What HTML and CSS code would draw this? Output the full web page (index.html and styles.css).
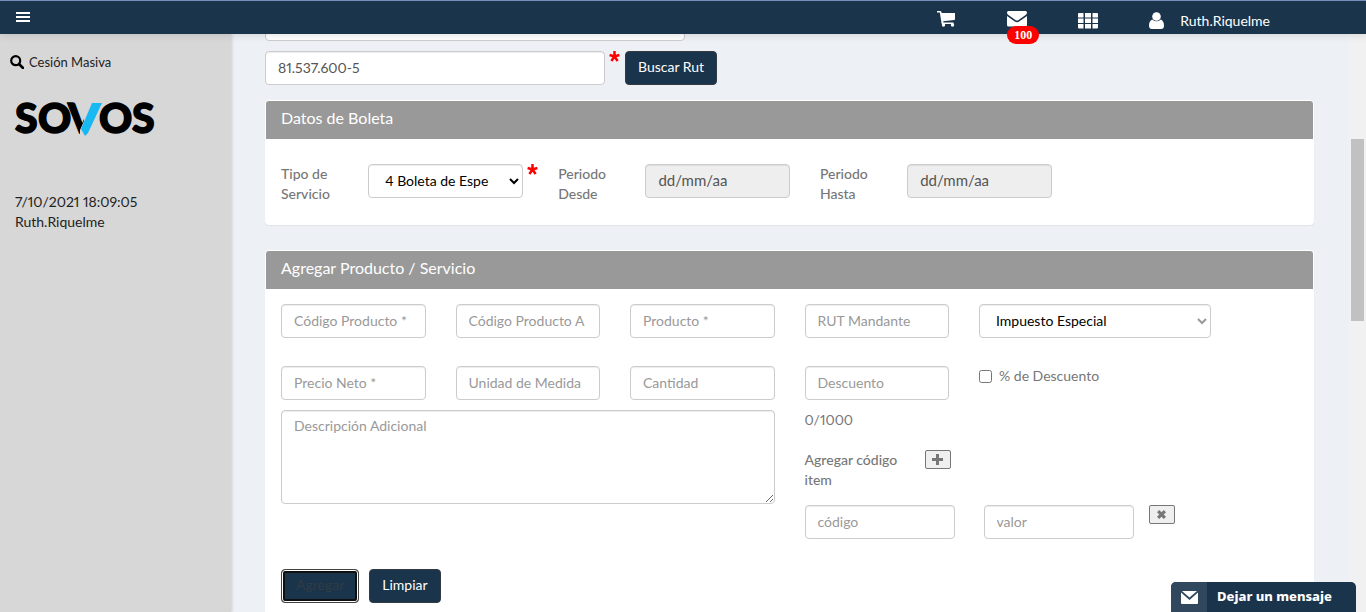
FILE: index.html
```html
<!DOCTYPE html>
<html lang="es">
<head>
<meta charset="utf-8">
<title>Boleta</title>
<link rel="stylesheet" href="styles.css">
</head>
<body>
<header class="topbar">
  <button class="icon-btn menu" aria-label="Menú"><svg width="14" height="12" viewBox="0 0 14 12"><path d="M0 1h14v2H0zM0 5h14v2H0zM0 9h14v2H0z"/></svg></button>
  <nav class="tools">
    <a class="tool" href="#" aria-label="Carro"><svg width="20" height="17" viewBox="0 0 20 17"><path d="M1 1h3.4q.8 0 1 .9l.2 1H19v6.2q0 .8-.8.9L7.2 11.3l.2 1.2H17.500v1.500H6.400q-.7 0-.8-.6L3.800 2.600H1z"/><circle cx="7.500" cy="15" r="1.700"/><circle cx="16.500" cy="15" r="1.700"/></svg></a>
    <a class="tool mail" href="#" aria-label="Mensajes"><svg width="20" height="16" viewBox="0 0 20 16"><path d="M1.500 0h17Q20 0 20 1.500q0 1.500-1.400 2.500l-7 5q-1.600 1.200-3.200 0l-7-5Q0 3 0 1.500 0 0 1.500 0zM0 5l7.800 5.500q2.200 1.500 4.400 0L20 5v9q0 1.500-1.500 1.500h-17Q0 15.500 0 14z"/></svg><span class="badge">100</span></a>
    <a class="tool" href="#" aria-label="Aplicaciones"><svg width="20" height="16" viewBox="0 0 20 16"><path d="M1 0h4.500v4.500H0V1q0-1 1-1zM7 0h6v4.500H7zM14.500 0H19q1 0 1 1v3.500h-5.500zM0 5.500h5.500V10H0zM7 5.500h6V10H7zM14.500 5.500H20V10h-5.500zM0 11h5.500v4.500H1q-1 0-1-1zM7 11h6v4.500H7zM14.500 11H20v3.500q0 1-1 1h-4.500z"/></svg></a>
    <a class="tool user" href="#"><svg width="15" height="17" viewBox="0 0 15 17"><circle cx="7.500" cy="4.500" r="4.300"/><path d="M3.200 7.500q4.300 3.700 8.600 0Q15 9 15 13.500q0 3.500-3 3.500H3q-3 0-3-3.500Q0 9 3.200 7.500z"/></svg><span>Ruth.Riquelme</span></a>
  </nav>
</header>
<div class="layout">
  <aside class="sidebar">
    <a class="search" href="#"><svg width="14" height="14" viewBox="0 0 14 14"><circle cx="5.700" cy="5.700" r="4.500" fill="none" stroke="currentColor" stroke-width="2.200"/><path d="M9 9l4 4" stroke="currentColor" stroke-width="2.600" stroke-linecap="round"/></svg>Cesión Masiva</a>
    <svg class="logo" width="142" height="36" viewBox="0 0 142 36" role="img" aria-label="SOVOS"><text class="logo-text" x="1 24 54" y="32">SOV</text><path class="logo-cut" d="M70 0h22v36H66v-7l4-9z"/><path class="logo-slash" d="M78 2h10L74 32l-3 3-4-7z"/><text class="logo-text" x="85 118" y="32">OS</text></svg>
    <div class="session">7/10/2021 18:09:05<br>Ruth.Riquelme</div>
  </aside>
  <main class="content">
    <div class="scrolled"><input class="control" aria-label="Nombre"></div>
    <div class="rut-row">
      <input class="control rut" value="81.537.600-5" aria-label="Rut">
      <span class="required"><svg width="11" height="11" viewBox="0 0 11 11"><path d="M5.500 5.500V0M5.500 5.500L.6 4M5.500 5.500L10.400 4M5.500 5.500L2.400 10M5.500 5.500L8.600 10"/></svg></span>
      <button class="btn">Buscar Rut</button>
    </div>
    <section class="panel receipt">
      <h2>Datos de Boleta</h2>
      <div class="period-row">
        <label for="tipo">Tipo de Servicio</label>
        <div class="service"><span class="select"><select id="tipo" class="control"><option>4 Boleta de Espe</option></select><svg width="10" height="7" viewBox="0 0 10 7"><path d="M1 1l4 4 4-4"/></svg></span><span class="required"><svg width="11" height="11" viewBox="0 0 11 11"><path d="M5.500 5.500V0M5.500 5.500L.6 4M5.500 5.500L10.400 4M5.500 5.500L2.400 10M5.500 5.500L8.600 10"/></svg></span></div>
        <label for="desde">Periodo Desde</label>
        <input id="desde" class="control date" value="dd/mm/aa" readonly>
        <label for="hasta">Periodo Hasta</label>
        <input id="hasta" class="control date" value="dd/mm/aa" readonly>
      </div>
    </section>
    <section class="panel product">
      <h2>Agregar Producto / Servicio</h2>
      <div class="grid">
        <input class="control" placeholder="Código Producto *" aria-label="Código Producto">
        <input class="control" placeholder="Código Producto A" aria-label="Código Producto A">
        <input class="control" placeholder="Producto *" aria-label="Producto">
        <input class="control" placeholder="RUT Mandante" aria-label="RUT Mandante">
        <span class="select muted wide"><select class="control" aria-label="Impuesto Especial"><option>Impuesto Especial</option></select><svg width="10" height="7" viewBox="0 0 10 7"><path d="M1 1l4 4 4-4"/></svg></span>
      </div>
      <div class="grid second">
        <input class="control" placeholder="Precio Neto *" aria-label="Precio Neto">
        <input class="control" placeholder="Unidad de Medida" aria-label="Unidad de Medida">
        <input class="control" placeholder="Cantidad" aria-label="Cantidad">
        <input class="control" placeholder="Descuento" aria-label="Descuento">
        <label class="check wide"><input type="checkbox">% de Descuento</label>
      </div>
      <div class="grid third">
        <textarea class="control" placeholder="Descripción Adicional" aria-label="Descripción Adicional"></textarea>
        <div class="extra">
          <div>0/1000</div>
          <div class="add"><span class="caption">Agregar código item</span><button class="mini" aria-label="Agregar código"><svg width="11" height="11" viewBox="0 0 11 11"><path d="M4 0h3v4h4v3H7v4H4V7H0V4h4z"/></svg></button></div>
          <div class="codes"><input class="control" placeholder="código" aria-label="código"><input class="control" placeholder="valor" aria-label="valor"><button class="mini" aria-label="Quitar"><svg width="9" height="9" viewBox="0 0 9 9"><path d="M2.200 0L4.500 2.300 6.800 0 9 2.200 6.700 4.500 9 6.800 6.800 9 4.500 6.700 2.200 9 0 6.800 2.300 4.500 0 2.200z"/></svg></button></div>
        </div>
      </div>
      <div class="actions"><button class="btn focused">Agregar</button><button class="btn">Limpiar</button></div>
    </section>
  </main>
  <div class="scrollbar"><div class="thumb"></div></div>
</div>
<button class="chat"><span class="chat-icon"><svg width="17" height="13" viewBox="0 0 17 13"><path d="M1 0h15l-7.500 6.500zM0 1.500L8.500 9 17 1.500V12q0 1-1 1H1q-1 0-1-1z"/></svg></span><span class="chat-text">Dejar un mensaje</span></button>
</body>
</html>
```
FILE: styles.css
```css
* { box-sizing: border-box; }
body {
  margin: 0;
  height: 100vh;
  overflow: hidden;
  display: flex;
  flex-direction: column;
  font: 14px/20px Lato, "Open Sans", sans-serif;
  font-variant-numeric: proportional-nums;
  color: #777;
  background: #edf0f5;
}
input, select, textarea, button { font: inherit; }
svg { display: block; fill: currentColor; }
a { color: inherit; text-decoration: none; }

.topbar {
  position: relative;
  z-index: 2;
  flex: none;
  display: flex;
  justify-content: space-between;
  height: 34px;
  padding: 0 94px 0 16px;
  color: #fff;
  background: #1a344b;
  border-top: 1px solid #7590bd;
  box-shadow: 0 1px 8px rgba(0, 0, 0, .12);
}
.icon-btn { padding: 0; border: 0; background: none; color: inherit; }
.menu { padding-bottom: 2px; }
.tools { display: flex; align-items: center; padding-top: 6px; }
.tool { margin-right: 51px; }
.tool:first-child { padding-bottom: 4px; }
.tool.mail { position: relative; padding-bottom: 4px; }
.badge {
  position: absolute;
  top: 15px;
  left: 0;
  width: 32px;
  border-radius: 9px;
  background: #f00;
  font: bold 12px/18px "Liberation Serif", serif;
  text-align: center;
}
.tool.user { display: flex; align-items: center; gap: 16px; margin: 0 2px 0 0; }

.layout { flex: 1; min-height: 0; display: flex; }
.sidebar {
  flex: none;
  width: 231px;
  background: #d7d7d7;
  color: #222;
  box-shadow: 1px 0 3px rgba(0, 0, 0, .15);
}
.search { display: flex; align-items: center; gap: 5px; padding: 18px 10px 0; font-size: 13px; }
.search svg { color: #000; }
.logo { margin: 29px 0 0 14px; overflow: visible; }
.logo-text { font: 900 41px Lato, sans-serif; fill: #000; stroke: #000; stroke-width: 1.5px; }
.logo-cut { fill: #d7d7d7; }
.logo-slash { fill: #18b9f2; }
.session { padding: 55px 15px 0; }

.content { flex: 1; min-width: 0; overflow: hidden; padding: 0 35px 0 34px; }
.control {
  display: block;
  width: 100%;
  min-width: 0;
  height: 34px;
  padding: 5px 12px 7px;
  border: 1px solid #ccc;
  border-radius: 4px;
  background: #fff;
  color: #555;
  box-shadow: inset 0 1px 1px rgba(0, 0, 0, .075);
}
.control::placeholder { color: #999; opacity: 1; }
.scrolled { height: 7px; width: 420px; display: flex; align-items: flex-end; }
.scrolled .control { flex: none; }
.rut-row { display: flex; margin-top: 10px; }
.rut { width: 340px; }
.required { flex: none; width: 20px; padding: 0 5px 0 4px; color: #f00; }
.required path { stroke: #f00; stroke-width: 2.5; }
.btn {
  height: 34px;
  padding: 0 12px 2px;
  border: 1px solid #333a42;
  border-radius: 4px;
  background: #1a344b;
  color: #fff;
}
.panel {
  border: 1px solid #fff;
  border-radius: 4px;
  background: #fff;
  box-shadow: 0 1px 1px rgba(0, 0, 0, .05);
}
.panel h2 {
  margin: 0;
  padding: 7px 15px 11px;
  border-radius: 3px 3px 0 0;
  background: #999;
  color: #fff;
  font-size: 16px;
  font-weight: 400;
  line-height: 20px;
}
.receipt { margin-top: 15px; }
.period-row {
  display: grid;
  grid-template-columns: 8.33% 190px 8.33% 16.67% 8.33% 16.67%;
  padding: 25px 0 20px;
}
.period-row > * { margin: 0 15px; }
.period-row .control { width: auto; }
.period-row label, .caption { font-weight: 500; color: #777; }
.period-row .service { display: flex; margin-right: 0; }
.select { position: relative; display: block; }
.service .select { width: 155px; }
.service .control, .select .control { width: 100%; }
.select .control { appearance: none; padding: 6px 12px 6px 16px; color: #000; }
.select svg {
  position: absolute;
  right: 4px;
  top: 14px;
  fill: none;
  stroke: #000;
  stroke-width: 2;
  pointer-events: none;
}
.select.muted svg { stroke: #999; }
.control.date { background: #eee; font-size: 15px; }
.product { margin-top: 25px; padding-bottom: 40px; }
.grid { display: grid; grid-template-columns: repeat(12, 1fr); padding-top: 15px; }
.grid > * { grid-column: span 2; width: auto; margin: 0 15px; }
.grid > .wide { grid-column: span 3; }
.grid.second { padding-top: 28px; }
.check { display: flex; align-items: flex-start; gap: 7px; }
.check input { width: 13px; height: 13px; margin: 4px 0 0; }
.grid.third { padding-top: 10px; }
.grid > textarea { grid-column: span 6; height: 94px; resize: vertical; }
.grid > .extra { grid-column: span 5; margin-right: 0; }
.add { display: flex; gap: 15px; margin-top: 20px; }
.caption { width: 105px; }
.mini {
  flex: none;
  display: flex;
  align-items: center;
  justify-content: center;
  width: 26px;
  height: 19px;
  padding: 0;
  border: 1px solid #767676;
  border-radius: 2px;
  background: #efefef;
  color: #777;
}
.codes { display: flex; margin-top: 15px; }
.codes .control { width: 150px; }
.codes .control + .control { margin: 0 15px 0 29px; }
.actions { display: flex; gap: 10px; padding: 30px 15px 0; }
.btn.focused {
  padding: 0 14px 2px;
  color: #303c46;
  border-color: #444;
  box-shadow: inset 0 0 0 1px #fff, inset 0 0 0 3px #101010;
}

.scrollbar { flex: none; width: 17px; padding: 105px 2px 0; background: #f1f1f1; }
.thumb { height: 182px; background: #c1c1c1; }
.chat {
  position: absolute;
  z-index: 3;
  right: 10px;
  bottom: 0;
  display: flex;
  width: 185px;
  height: 30px;
  padding: 0;
  border: 0;
  border-radius: 5px 5px 0 0;
  overflow: hidden;
  background: #1a344b;
  color: #fff;
}
.chat-icon { display: flex; align-items: center; justify-content: center; width: 36px; height: 30px; background: #30475e; }
.chat-text { padding-left: 10px; font: 800 13px/29px "Noto Sans", sans-serif; }
```
